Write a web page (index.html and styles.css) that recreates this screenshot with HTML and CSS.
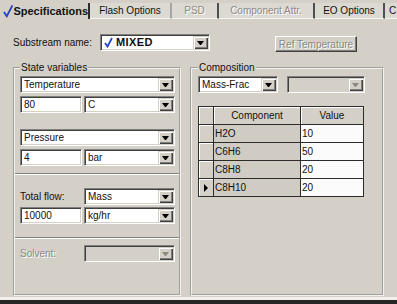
FILE: index.html
```html
<!DOCTYPE html>
<html lang="en">
<head>
    <meta charset="UTF-8">
    <title>Stream Specifications</title>
    <link rel="stylesheet" href="styles.css">
</head>
<body>
    <div class="tabs">
        <div class="tab tab-active">
            <svg class="check" width="11" height="14" viewBox="0 0 11 14"><path d="M1 8 L4 12.5 L10 1" fill="none" stroke="#2346c8" stroke-width="2"/></svg>
            Specifications
        </div>
        <div class="tab tab-flash">Flash Options</div>
        <div class="tab tab-psd disabled">PSD</div>
        <div class="tab tab-attr disabled">Component Attr.</div>
        <div class="tab tab-eo">EO Options</div>
        <div class="tab tab-more">C</div>
    </div>

    <div class="sheet">
        <div class="top-row">
            <span class="top-label">Substream name:</span>
            <div class="combo combo-stream">
                <span class="value value-bold">
                    <svg class="check-small" width="9" height="11" viewBox="0 0 9 11"><path d="M1 6 L3.5 9.5 L8 1" fill="none" stroke="#2346c8" stroke-width="1.8"/></svg>
                    MIXED
                </span>
                <span class="drop"></span>
            </div>
            <button class="btn" disabled>Ref Temperature</button>
        </div>

        <div class="columns">
            <fieldset class="group group-left">
                <legend>State variables</legend>

                <div class="combo"><span class="value">Temperature</span><span class="drop"></span></div>
                <div class="pair">
                    <div class="edit">80</div>
                    <div class="combo combo-unit"><span class="value">C</span><span class="drop"></span></div>
                </div>

                <div class="combo combo-gap"><span class="value">Pressure</span><span class="drop"></span></div>
                <div class="pair">
                    <div class="edit">4</div>
                    <div class="combo combo-unit"><span class="value">bar</span><span class="drop"></span></div>
                </div>

                <div class="divider"></div>

                <div class="pair pair-flow">
                    <span class="field-label">Total flow:</span>
                    <div class="combo combo-unit"><span class="value">Mass</span><span class="drop"></span></div>
                </div>
                <div class="pair pair-tight">
                    <div class="edit">10000</div>
                    <div class="combo combo-unit"><span class="value">kg/hr</span><span class="drop"></span></div>
                </div>

                <div class="divider divider-second"></div>

                <div class="pair pair-solvent">
                    <span class="field-label disabled">Solvent:</span>
                    <div class="combo combo-unit combo-disabled"><span class="value"></span><span class="drop"></span></div>
                </div>
            </fieldset>

            <fieldset class="group group-right">
                <legend>Composition</legend>

                <div class="basis">
                    <div class="combo combo-basis"><span class="value">Mass-Frac</span><span class="drop"></span></div>
                    <div class="combo combo-basis2 combo-disabled"><span class="value"></span><span class="drop"></span></div>
                </div>

                <table class="grid">
                    <colgroup>
                        <col class="col-sel">
                        <col class="col-comp">
                        <col class="col-val">
                    </colgroup>
                    <thead>
                        <tr><th class="sel"></th><th>Component</th><th>Value</th></tr>
                    </thead>
                    <tbody>
                        <tr><td class="sel"></td><td class="comp">H2O</td><td class="val">10</td></tr>
                        <tr><td class="sel"></td><td class="comp">C6H6</td><td class="val">50</td></tr>
                        <tr><td class="sel"></td><td class="comp">C8H8</td><td class="val">20</td></tr>
                        <tr><td class="sel"><span class="pointer"></span></td><td class="comp">C8H10</td><td class="val">20</td></tr>
                    </tbody>
                </table>
            </fieldset>
        </div>
    </div>

    <div class="footer"></div>
</body>
</html>
```

FILE: styles.css
```css
:root {
    --face: #d4d0c8;
    --shadow: #808080;
    --dark: #404040;
    --light: #ffffff;
    --grey-text: #8c8882;
}

* {
    box-sizing: border-box;
    margin: 0;
    padding: 0;
}

body {
    width: 397px;
    height: 304px;
    overflow: hidden;
    background: var(--face);
    font-family: "Liberation Sans", Arial, sans-serif;
    font-size: 10px;
    color: #111;
}

.disabled {
    color: var(--grey-text);
    text-shadow: 1px 1px 0 var(--light);
}

/* Tabs */
.tabs {
    display: flex;
    height: 20px;
}

.tab {
    display: flex;
    align-items: center;
    justify-content: center;
    height: 16px;
    margin-top: 3px;
    padding-bottom: 1px;
    background: #dcd9d3;
    border-right: 2px solid #505050;
    border-bottom: 1px solid #f6f5f2;
    white-space: nowrap;
}

.tab-active {
    justify-content: flex-start;
    width: 90px;
    padding-left: 3px;
    background: var(--face);
    border-right-color: #2c2c2c;
    border-bottom: none;
    font-size: 11px;
    font-weight: bold;
}

.tab-flash {
    width: 82px;
    border-right-color: #a8a6a0;
}

.tab-psd { width: 47px; }
.tab-attr { width: 96px; }
.tab-eo { width: 70px; }

.tab-more {
    flex: 1;
    border-right: none;
    justify-content: flex-start;
    padding-left: 4px;
}

/* Sheet */
.sheet {
    height: 277px;
    padding: 14px 0 0 13px;
}

.top-row {
    display: flex;
    align-items: flex-start;
}

.top-label {
    width: 87px;
    line-height: 17px;
}

.combo {
    display: flex;
    height: 17px;
    padding: 1px;
    background: #fff;
    border: 1px solid;
    border-color: var(--shadow) var(--light) var(--light) var(--shadow);
    box-shadow: inset 1px 1px 0 var(--dark), inset -1px -1px 0 var(--face);
}

.combo-stream {
    width: 110px;
}

.value {
    flex: 1;
    display: flex;
    align-items: center;
    padding-left: 2px;
    line-height: 13px;
    overflow: hidden;
    white-space: nowrap;
}

.value-bold {
    font-weight: bold;
    font-size: 11px;
    letter-spacing: 0.4px;
}

.check-small {
    margin-right: 3px;
}

.drop {
    width: 15px;
    background: var(--face);
    box-shadow: inset 1px 1px 0 var(--face), inset 2px 2px 0 var(--light), inset -1px -1px 0 var(--dark), inset -2px -2px 0 var(--shadow);
    display: flex;
    align-items: center;
    justify-content: center;
}

.drop::after {
    content: "";
    width: 1px;
    border-left: 3px solid transparent;
    border-right: 3px solid transparent;
    border-top: 4px solid #000;
}

.combo-disabled {
    background: var(--face);
}

.combo-disabled .drop::after {
    border-top-color: var(--grey-text);
}

.btn {
    width: 82px;
    height: 16px;
    margin: 2px 0 0 65px;
    background: var(--face);
    border: 1px solid;
    border-color: var(--light) var(--dark) var(--dark) var(--light);
    box-shadow: inset -1px -1px 0 var(--shadow);
    font-family: inherit;
    font-size: 10px;
    white-space: nowrap;
    color: var(--grey-text);
    text-shadow: 1px 1px 0 var(--light);
}

/* Group boxes */
.columns {
    display: flex;
    gap: 9px;
    margin-top: 10px;
}

.group {
    height: 234px;
    border: 2px groove #f4f2ee;
}

.group legend {
    padding: 0 1px;
    line-height: 12px;
}

.group-left {
    width: 168px;
    padding: 2px 4px 0 5px;
}

.group-right {
    width: 194px;
    padding: 1px 4px 0 6px;
}

.pair {
    display: flex;
    align-items: center;
    gap: 2px;
    margin-top: 3px;
}

.edit {
    width: 62px;
    height: 17px;
    padding: 1px 3px;
    background: #fff;
    border: 1px solid;
    border-color: var(--shadow) var(--light) var(--light) var(--shadow);
    box-shadow: inset 1px 1px 0 var(--dark), inset -1px -1px 0 var(--face);
    line-height: 13px;
}

.combo-unit {
    flex: 1;
}

.combo-gap {
    margin-top: 16px;
}

.divider {
    height: 2px;
    margin: 7px -4px 0 -5px;
    border-top: 1px solid var(--shadow);
    border-bottom: 1px solid var(--light);
}

.pair-flow {
    margin-top: 13px;
}

.pair-tight {
    margin-top: 2px;
}

.divider-second {
    margin-top: 13px;
}

.pair-solvent {
    margin-top: 6px;
}

.field-label {
    width: 62px;
}

/* Composition */
.basis {
    display: flex;
    gap: 9px;
    margin-top: 1px;
}

.combo-basis {
    width: 80px;
}

.combo-basis2 {
    width: 78px;
}

.grid {
    width: 165px;
    margin-top: 13px;
    table-layout: fixed;
    border-collapse: collapse;
    font-size: 10px;
}

.col-sel { width: 15px; }
.col-comp { width: 87px; }
.col-val { width: 63px; }

.grid th,
.grid td {
    height: 18px;
    padding: 0 1px;
    border: 1px solid #2c2c2c;
    font-weight: normal;
}

.grid th {
    text-align: center;
    background: var(--face);
    box-shadow: inset 1px 1px 0 var(--light);
}

.grid td.sel {
    background: var(--face);
    box-shadow: inset 1px 1px 0 var(--light);
}

.grid td.comp {
    background: #d0ccc4;
}

.grid td.val {
    background: #fbfbfb;
}

.pointer {
    display: block;
    width: 0;
    margin-left: 4px;
    border-top: 4px solid transparent;
    border-bottom: 4px solid transparent;
    border-left: 4px solid #000;
}

.footer {
    height: 7px;
    border-top: 3px solid #f2f0ec;
    background: #262626;
}
```
